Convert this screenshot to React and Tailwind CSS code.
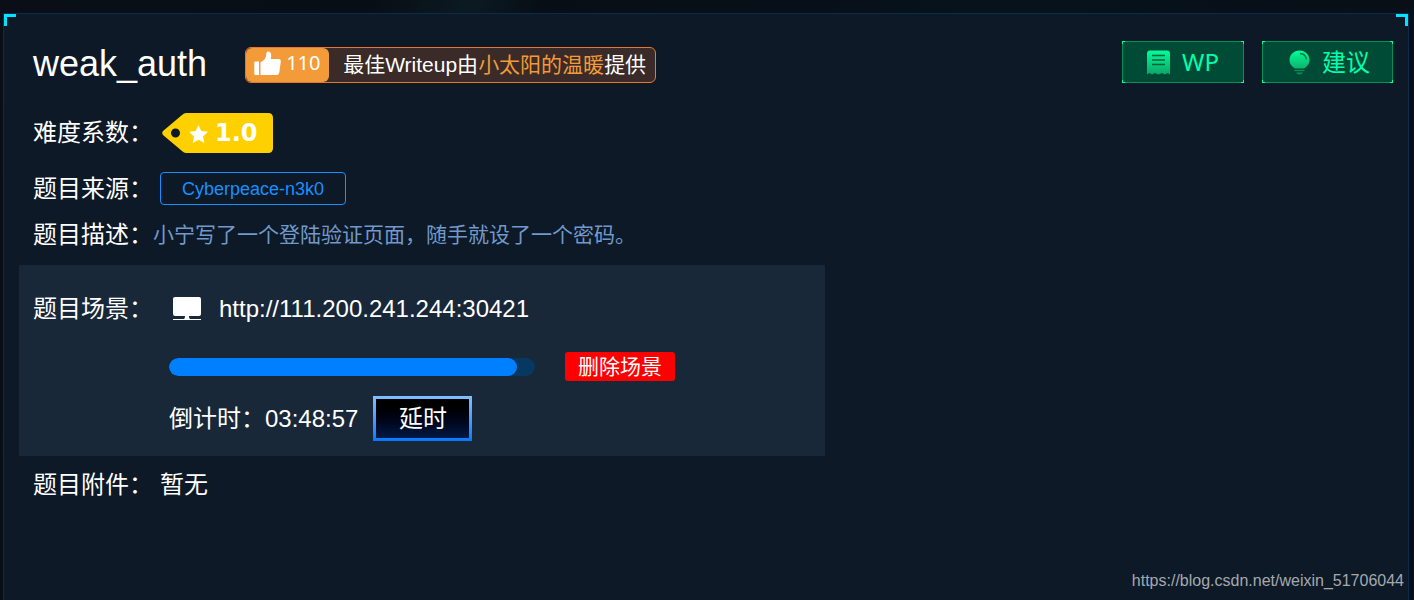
const cjk = "font-['Liberation_Sans','Noto_Sans_CJK_SC',sans-serif]";

function ThumbIcon() {
  return (
    <svg className="mb-1 h-[25px] w-[27px] shrink-0" viewBox="0 0 27 25" fill="#fff" aria-hidden="true">
      <path d="M1.3 10.500h3.700v13.500H1.300a1 1 0 0 1-1-1V11.500a1 1 0 0 1 1-1zM6.500 11.200c4-1.500 5.600-4.200 5.800-8.200C12.400 1 13.200.3 14.400.5c2.800.500 3.400 3.500 2.400 7.500H24.500c1.900 0 2.500 1.200 2.300 2.700l-1.500 10.500c-.3 1.900-1.300 2.800-2.800 2.800H6.500z" />
    </svg>
  );
}

function ReceiptIcon() {
  return (
    <svg className="h-[25px] w-[23px] shrink-0" viewBox="0 0 23 25" aria-hidden="true">
      <defs>
        <linearGradient id="receipt" x1="0" y1="0" x2="0" y2="1">
          <stop offset="0" stopColor="#00ff99" />
          <stop offset="1" stopColor="#0da565" />
        </linearGradient>
      </defs>
      <path d="M3 .500h17q3 0 3 3v21l-2.500-1.500-2.500 1.500-3-1.500-3.500 1.500-3.500-1.500-3 1.500L2.500 23 0 24.500v-21q0-3 3-3z" fill="url(#receipt)" />
      <path d="M5 5.500h13M5 10h13M5 14.500h13" stroke="#00603d" strokeWidth="1.500" />
    </svg>
  );
}

function BulbIcon() {
  return (
    <svg className="h-[25px] w-[21px] shrink-0" viewBox="0 0 21 25" aria-hidden="true">
      <defs>
        <linearGradient id="bulb" x1="0" y1="0" x2="0" y2="1">
          <stop offset="0" stopColor="#00ff99" />
          <stop offset="1" stopColor="#0db36d" />
        </linearGradient>
      </defs>
      <path d="M10.500 .500C16.500 .500 20.500 5 20.500 10c0 3.500-1.700 5.500-3.500 7-.8.800-1.500 1.500-2.500 1.500h-8c-1 0-1.700-.7-2.500-1.500-1.800-1.500-3.500-3.500-3.500-7C.5 5 4.500.500 10.500.500z" fill="url(#bulb)" />
      <path d="M11 3.500c3.800.200 6 2.800 6.200 6" fill="none" stroke="#007548" strokeWidth="1.400" />
      <path d="M5.500 20.500h10" stroke="#0b8f5a" strokeWidth="1.300" />
      <path d="M7 22.500h7q-1.200 2-3.500 2T7 22.500z" fill="#0b8f5a" />
    </svg>
  );
}

function MonitorIcon() {
  return (
    <svg className="h-6 w-7 shrink-0" viewBox="0 0 28 24" fill="#fff" aria-hidden="true">
      <path d="M2 0h24q2 0 2 2v15q0 2-2 2H16q0 2.500 1 3h11v1H0v-1h11q1-.5 1-3H2q-2 0-2-2V2q0-2 2-2z" />
    </svg>
  );
}

function DifficultyTag() {
  return (
    <div className="relative ml-[9px] flex h-10 w-[111px] items-center">
      <svg className="absolute inset-0 h-full w-full" viewBox="0 0 111 40" aria-hidden="true">
        <path fillRule="evenodd" fill="#ffd000" d="M24 0h82q5 0 5 5v30q0 5-5 5H24q-2 0-4-2L1 22q-1.500-2 0-4L20 2q2-2 4-2zM13.500 15.500a4.500 4.500 0 1 0 0 9 4.500 4.500 0 0 0 0-9z" />
        <path fill="#fff" d="M36.500 12l2.800 6 6.700.800-5 4.600 1.300 6.600-5.800-3.300-5.800 3.300 1.300-6.600-5-4.600 6.700-.800z" />
      </svg>
      <span className="relative ml-[53px] font-['DejaVu_Sans',sans-serif] text-2xl font-bold text-white">1.0</span>
    </div>
  );
}

function CornerMarks() {
  return (
    <>
      <span className="absolute top-0 left-0 size-3 border-t-3 border-l-3 border-[#00e4ff]" />
      <span className="absolute top-0 right-0 size-3 border-t-3 border-r-3 border-[#00e4ff]" />
    </>
  );
}

function ActionButton({ icon, width, children }) {
  return (
    <button type="button" className={`${width} relative flex h-[42px] items-center justify-center gap-3 border border-[#00915b] bg-[#004b35] font-['Noto_Sans','Noto_Sans_CJK_SC',sans-serif] text-2xl leading-8 text-[#00ffae]`}>
      <span className="absolute -top-px -left-px size-[3px] border-t border-l border-[#00ff99]" />
      <span className="absolute -top-px -right-px size-[3px] border-t border-r border-[#00ff99]" />
      <span className="absolute -bottom-px -left-px size-[3px] border-b border-l border-[#00ff99]" />
      <span className="absolute -right-px -bottom-px size-[3px] border-r border-b border-[#00ff99]" />
      {icon}
      {children}
    </button>
  );
}

function Label({ children }) {
  return <span className="w-[120px] shrink-0 text-2xl leading-7 whitespace-nowrap">{children}</span>;
}

export default function App() {
  return (
    <div className={`${cjk} flex min-h-screen flex-col bg-[linear-gradient(115deg,#090e17_0%,#080e16_22%,#0b1a21_28%,#070e16_32%,#07121a_60%,#080d15_100%)] pt-[13px] pr-[5px] pl-[3px] text-white`}>
      <main className="relative flex grow flex-col border-x border-t border-[#0b2c4d] bg-[#0d1926] px-[15px] pt-[27px]">
        <CornerMarks />

        <header className="flex h-[42px] items-center pl-[14px]">
          <h1 className="pt-1 text-4xl leading-10">weak_auth</h1>
          <div className="mt-[6px] ml-[38px] flex h-9 items-center rounded-md border border-[#e8792b] bg-[#3a2a28] pr-[9px] text-[21px] leading-7">
            <div className="flex h-full w-[83px] items-center gap-[5px] rounded-md bg-[#f29b38] pl-2 font-['Noto_Sans',sans-serif] text-xl leading-7">
              <ThumbIcon />
              <span className="pb-1">110</span>
            </div>
            <p className="ml-[14px] whitespace-nowrap">
              最佳Writeup由<span className="text-[#f29b38]">小太阳的温暖</span>提供
            </p>
          </div>
          <div className="ml-auto flex gap-[18px]">
            <ActionButton width="w-[122px]" icon={<ReceiptIcon />}>WP</ActionButton>
            <ActionButton width="w-[131px] pl-1" icon={<BulbIcon />}>建议</ActionButton>
          </div>
        </header>

        <div className="mt-[30px] flex items-center pl-[14px]">
          <Label>难度系数：</Label>
          <DifficultyTag />
        </div>

        <div className="mt-[19px] flex items-center pl-[14px]">
          <Label>题目来源：</Label>
          <span className="ml-[7px] flex h-[33px] items-center rounded-sm border border-[#1890ff] px-[21px] text-lg leading-6 text-[#1890ff]">Cyberpeace-n3k0</span>
        </div>

        <div className="mt-4 flex items-center pl-[14px]">
          <Label>题目描述：</Label>
          <p className="text-[21px] leading-7 text-[#7299cc]">小宁写了一个登陆验证页面，随手就设了一个密码。</p>
        </div>

        <section className="mt-4 w-[806px] max-w-full bg-[#182839] px-[14px] pt-7 pb-[15px]">
          <div className="flex h-8 items-center">
            <Label>题目场景：</Label>
            <div className="ml-5 flex items-center gap-[18px]">
              <MonitorIcon />
              <a href="http://111.200.241.244:30421" className="text-2xl leading-7">http://111.200.241.244:30421</a>
            </div>
          </div>
          <div className="mt-[27px] ml-[136px] flex items-center gap-[30px]">
            <div role="progressbar" aria-label="倒计时" aria-valuenow={95} aria-valuemin={0} aria-valuemax={100} className="h-[18px] w-[366px] overflow-hidden rounded-full bg-[#073861]">
              <div className="h-full w-[95%] rounded-full bg-[#0080ff]" />
            </div>
            <button type="button" className="h-[29px] w-[110px] rounded-[3px] bg-[#ff0000] text-[21px] leading-7">删除场景</button>
          </div>
          <div className="mt-[15px] ml-[136px] flex items-center gap-[15px] text-2xl leading-7">
            <span>倒计时：03:48:57</span>
            <span className="flex bg-linear-to-b from-[#80bfff] to-[#0077ff] p-[3px]">
              <button type="button" className="h-[39px] w-[93px] bg-linear-to-b from-[#000000] to-[#001a45]">延时</button>
            </span>
          </div>
        </section>

        <div className="mt-[15px] flex items-center pl-[14px]">
          <Label>题目附件：</Label>
          <span className="ml-[7px] text-2xl leading-7">暂无</span>
        </div>

        <footer className="mt-auto -mr-[11px] mb-[7px] self-end text-base leading-6 text-[#a4a9ae]">https://blog.csdn.net/weixin_51706044</footer>
      </main>
    </div>
  );
}
